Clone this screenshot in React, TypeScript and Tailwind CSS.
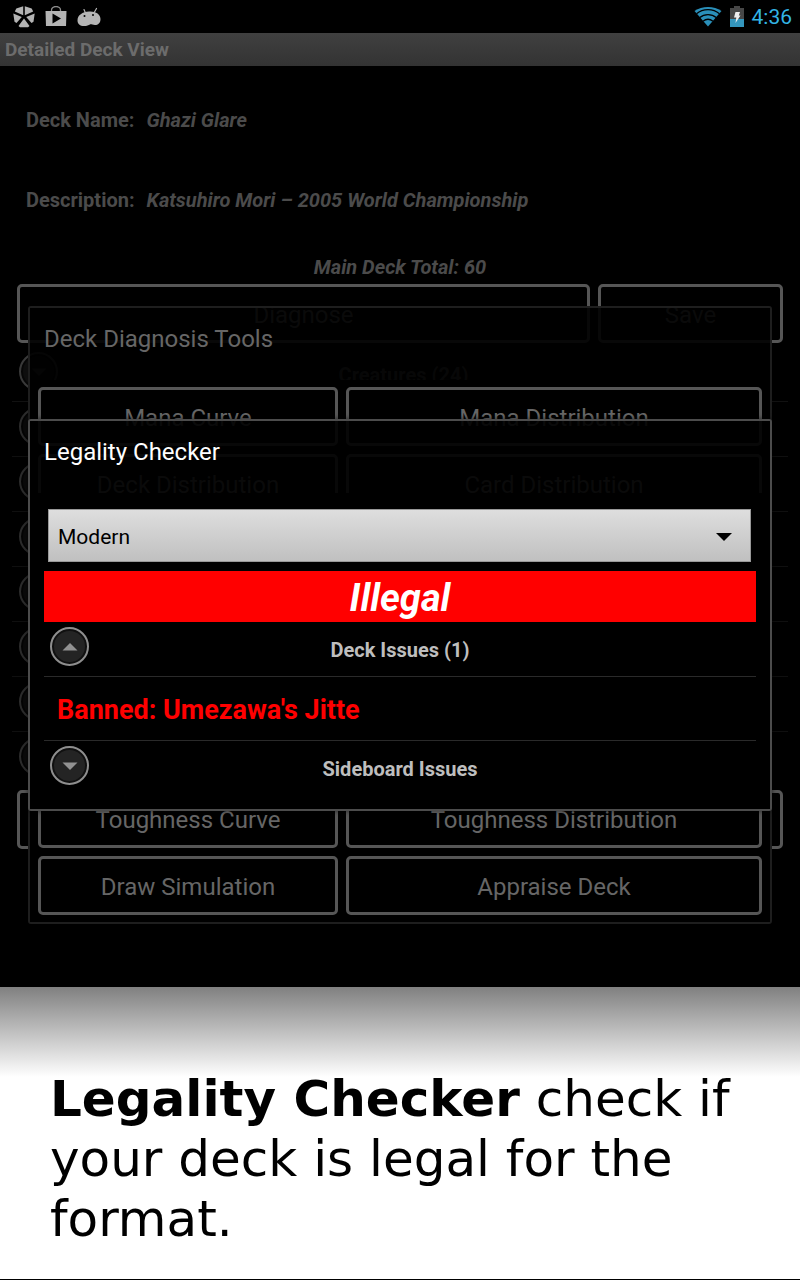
import { useState } from "react";
import type { ReactNode } from "react";

const deckRows = [1, 2, 3, 4, 5, 6, 7];

function PentagonIcon() {
  return (
    <svg viewBox="0 0 22 22" className="size-[22px]" fill="#b4b4b4" aria-hidden="true">
      <path d="M3.300 2.500L10.200 0.300V9.200L1.800 5.500zM18.700 2.500L11.800 0.300V9.200L20.200 5.500zM0.300 7.400L8.800 11 3.500 17 1.500 15.800zM21.700 7.400L13.200 11l5.300 6 2-1.200zM11 12.500l5.500 7.500-1.500 1.300H7L5.500 20z" />
    </svg>
  );
}

function StoreIcon() {
  return (
    <svg viewBox="0 0 22 22" className="size-[22px]" aria-hidden="true">
      <path d="M6.500 5V4a4.500 3.500 0 0 1 9 0v1" fill="none" stroke="#8c8c8c" strokeWidth="1.300" />
      <path d="M0.500 5h21l-.5 15H1z" fill="#b4b4b4" />
      <path d="M7.500 7.600l8.500 5-8.500 5z" fill="#000" />
    </svg>
  );
}

function DroidIcon() {
  return (
    <svg viewBox="0 0 24 20" className="h-5 w-6" aria-hidden="true">
      <path d="M8.500 6L7 2.500M17.500 5l2-3.500" stroke="#b4b4b4" strokeWidth="1.200" strokeLinecap="round" />
      <path d="M0.500 13.500C0.500 8 5.500 5 12 4.500S23.500 7 23.500 12c0 4-2.500 6-5.500 6-2.500 0-3.500-.8-5-.6-1.500.4-3 1.600-6 1.600-4 0-6.500-2-6.500-5.500z" fill="#b4b4b4" />
      <circle cx="7.500" cy="9" r="1" fill="#000" />
      <circle cx="16" cy="8" r="1" fill="#000" />
    </svg>
  );
}

function WifiIcon() {
  return (
    <svg viewBox="0 0 28 21" className="h-[21px] w-7" aria-hidden="true">
      <path d="M14 20.500L0.500 5C8 -0.500 20 -0.500 27.500 5z" fill="#2a8fb9" />
      <path d="M2.500 7.800c6.500-5.600 16.500-5.600 23 0M5.800 11.600c4.600-4 11.800-4 16.400 0M9 15.300c3-2.500 7-2.500 10 0" fill="none" stroke="#000" strokeWidth="1.300" />
    </svg>
  );
}

function BatteryIcon() {
  return (
    <svg viewBox="0 0 14 21" className="h-[21px] w-3.5" aria-hidden="true">
      <path d="M4 0h6v2h4v19H0V2h4z" fill="#474747" />
      <path d="M0 13h14v8H0z" fill="#3496bd" />
      <path d="M5.500 6H10L8.800 9.500h1.700L5.500 17l.8-5.500H4z" fill="#eee" />
    </svg>
  );
}

function Disclosure({ open = false, label }: { open?: boolean; label: string }) {
  return (
    <button
      type="button"
      aria-label={label}
      aria-expanded={open}
      className="grid size-[39px] place-items-center rounded-full border-2 border-[#8e8e8e] bg-[#242424] shadow-[inset_0_0_0_2px_#101010]"
    >
      <svg viewBox="0 0 16 8" className="h-2 w-4" fill="#929292" aria-hidden="true">
        {open ? <path d="M8 0l7.500 7.500H0.500z" /> : <path d="M0.500 0.500h15L8 8z" />}
      </svg>
    </button>
  );
}

function OutlineButton({ children }: { children: ReactNode }) {
  return (
    <button
      type="button"
      className="h-[59px] rounded-[5px] border-[3px] border-[#565656] pt-0.5 text-[24px] leading-7 text-[#666]"
    >
      {children}
    </button>
  );
}

function StatusBar() {
  return (
    <div className="flex h-[33px] items-center justify-between bg-black pr-2 pl-[13px]">
      <div className="flex items-center gap-2.5">
        <PentagonIcon />
        <StoreIcon />
        <DroidIcon />
      </div>
      <div className="flex items-center gap-2">
        <WifiIcon />
        <BatteryIcon />
        <span className="pt-px text-[21px] leading-8 text-[#33b5e5]">4:36</span>
      </div>
    </div>
  );
}

function DeckView() {
  return (
    <main className="pb-[138px] text-[20px] leading-7 font-bold text-[#4b4b4b]">
      <h1 className="flex h-[33px] items-center bg-linear-to-b from-[#404040] to-[#333] pl-[5px] text-[19px] text-[#6c6c6c]">
        Detailed Deck View
      </h1>
      <dl className="px-[26px] pt-10">
        <div className="flex gap-3 pb-[52px]">
          <dt>Deck Name:</dt>
          <dd className="italic">Ghazi Glare</dd>
        </div>
        <div className="flex gap-3">
          <dt>Description:</dt>
          <dd className="italic">Katsuhiro Mori – 2005 World Championship</dd>
        </div>
      </dl>
      <p className="pt-[39px] text-center italic">Main Deck Total: 60</p>
      <div className="grid grid-cols-[573fr_185fr] gap-2 px-[17px] pt-[3px] font-normal">
        <OutlineButton>Diagnose</OutlineButton>
        <OutlineButton>Save</OutlineButton>
      </div>
      <ul className="px-3 pt-1">
        <li className="grid h-[55px] grid-cols-[52px_1fr_52px] border-b border-[#111] pt-[5px] pl-[7px]">
          <span className="opacity-40">
            <Disclosure label="Creatures" />
          </span>
          <span className="pt-[9px] text-center">Creatures (24)</span>
        </li>
        {deckRows.map((row) => (
          <li
            key={row}
            className={
              row < 7
                ? "h-[55px] border-b border-[#333] pt-[5px] pl-[7px] opacity-30"
                : "h-[58px] pt-[5px] pl-[7px] opacity-30"
            }
          >
            <Disclosure label={`Group ${row + 1}`} />
          </li>
        ))}
      </ul>
      <div className="mx-[17px] h-[59px] rounded-[5px] border-[3px] border-[#565656]" />
    </main>
  );
}

function Dialog({ title, dimmed = false, children }: { title: string; dimmed?: boolean; children: ReactNode }) {
  return (
    <div className="absolute inset-0 flex items-center px-7 pb-[50px]">
      <section
        role="dialog"
        aria-label={title}
        className={
          dimmed
            ? "w-full rounded-[3px] border-2 border-[#1e1e1e]"
            : "w-full rounded-[3px] border-2 border-[#4c4c4c] shadow-[0_0_5px_rgba(0,0,0,0.6)]"
        }
      >
        <h2
          className={
            dimmed
              ? "h-[72px] bg-black/90 px-3.5 text-[24px] leading-[62px] text-[#666]"
              : "h-[72px] bg-black/90 px-3.5 text-[24px] leading-[62px] text-white"
          }
        >
          {title}
        </h2>
        <div className="bg-black">{children}</div>
      </section>
    </div>
  );
}

function DiagnosisTools() {
  return (
    <Dialog title="Deck Diagnosis Tools" dimmed>
      <div className="grid grid-cols-[300fr_416fr] gap-2 px-2 pt-[7px] pb-[7px]">
        <OutlineButton>Mana Curve</OutlineButton>
        <OutlineButton>Mana Distribution</OutlineButton>
        <OutlineButton>Deck Distribution</OutlineButton>
        <OutlineButton>Card Distribution</OutlineButton>
        <div className="col-span-2 h-[260px]" />
        <OutlineButton>Toughness Curve</OutlineButton>
        <OutlineButton>Toughness Distribution</OutlineButton>
        <OutlineButton>Draw Simulation</OutlineButton>
        <OutlineButton>Appraise Deck</OutlineButton>
      </div>
    </Dialog>
  );
}

function IssueHeader({ title, open = false }: { title: string; open?: boolean }) {
  return (
    <div className="grid h-[54px] grid-cols-[52px_1fr_52px] pt-[5px]">
      <div className="pl-1.5">
        <Disclosure open={open} label={title} />
      </div>
      <h3 className="pt-[9px] text-center text-[20px] leading-7 font-bold text-[#bebebe]">{title}</h3>
    </div>
  );
}

function LegalityChecker() {
  const [format, setFormat] = useState("Modern");

  return (
    <Dialog title="Legality Checker">
      <div className="px-3.5 pt-4 pb-3.5">
        <div className="relative mr-[5px] ml-1">
          <select
            aria-label="Format"
            value={format}
            onChange={(e) => setFormat(e.target.value)}
            className="block h-[53px] w-full appearance-none border border-[#999] bg-linear-to-b from-[#dedede] to-[#c0c0c0] px-[9px] pt-1 text-[21px] text-black"
          >
            <option>Modern</option>
          </select>
          <svg
            viewBox="0 0 16 8"
            className="pointer-events-none absolute top-6 right-[19px] h-2 w-4"
            aria-hidden="true"
          >
            <path d="M0 0h16L8 8z" />
          </svg>
        </div>
        <p className="mt-[9px] h-[51px] bg-[#f00] text-center text-[38px] leading-[54px] font-bold text-white italic">
          Illegal
        </p>
        <IssueHeader title="Deck Issues (1)" open />
        <p className="border-y border-[#2a2a2a] px-[13px] pt-1 text-[27px] leading-[59px] font-bold text-[#f00]">
          Banned: Umezawa's Jitte
        </p>
        <IssueHeader title="Sideboard Issues" />
      </div>
    </Dialog>
  );
}

export default function App() {
  return (
    <div className="relative min-h-screen overflow-hidden bg-black font-[Roboto,sans-serif]">
      <StatusBar />
      <DeckView />
      <DiagnosisTools />
      <LegalityChecker />
      <footer className="relative border-b border-black bg-white bg-[linear-gradient(#808080,#fff_90px)] px-[50px] pt-[82px] pb-[30px] font-['DejaVu_Sans',sans-serif] text-[50px] leading-[60px] text-black">
        <p>
          <b>Legality Checker</b> check if your deck is legal for the format.
        </p>
      </footer>
    </div>
  );
}
